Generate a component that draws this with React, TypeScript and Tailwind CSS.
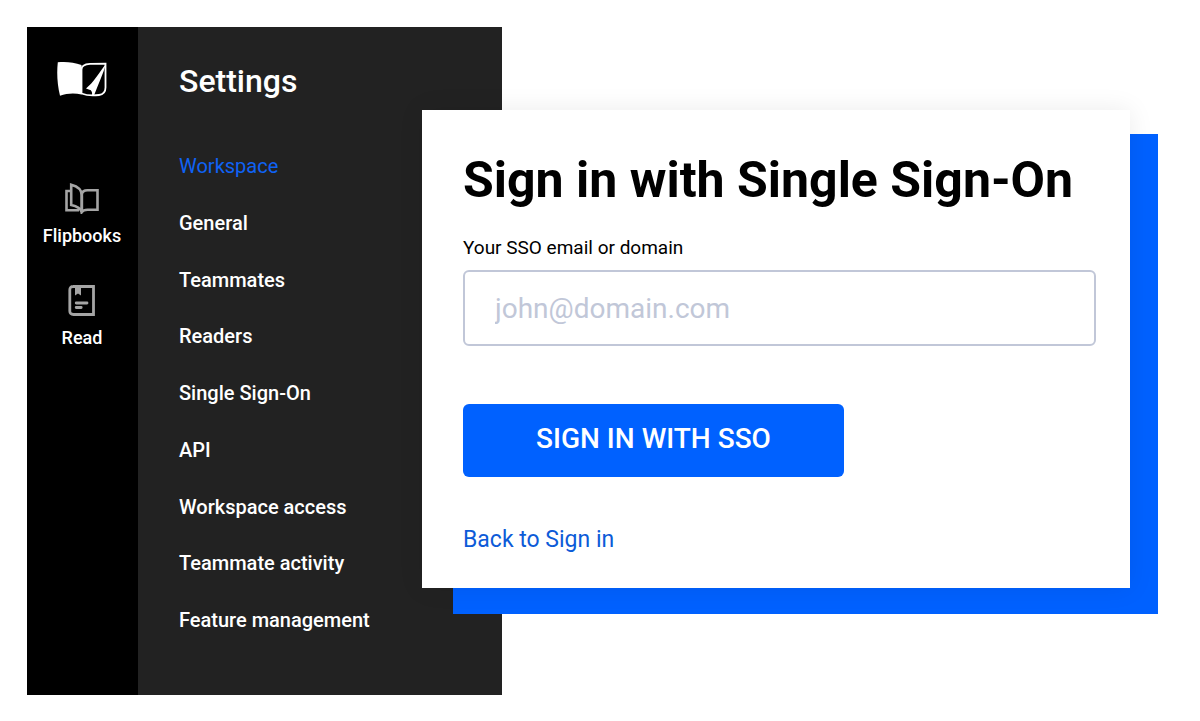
import clsx from "clsx";

const menuItems = [
  "Workspace",
  "General",
  "Teammates",
  "Readers",
  "Single Sign-On",
  "API",
  "Workspace access",
  "Teammate activity",
  "Feature management",
];

function Logo() {
  return (
    <svg viewBox="0 0 50 36" className="h-9 w-[50px]" fill="none" aria-hidden="true">
      <path
        d="M.8 1.2C9 .4 17 1.2 24.5 4V33.5c-7-1.5-14.5-1.2-21.5 1.2C.3 24-.4 12 .8 1.2Z"
        fill="#fff"
      />
      <path
        d="M24.5 8.5C24.5 4.5 28 3.2 33 2.9L48.5 2.6V26.5c0 4.800-2 6.900-6.500 7.500-6 .8-11.500.8-17.500-1.500Z"
        stroke="#fff"
        strokeWidth="1.800"
      />
      <path
        d="M49.2 2.5C46 13 41 24 37 34.5h-2c.4-2.500-.2-4.200-1.200-5.200l-4.800-1.800C36.500 21.500 42 12 49.2 2.500Z"
        fill="#fff"
      />
    </svg>
  );
}

function FlipbooksIcon() {
  return (
    <svg
      viewBox="0 0 34 32"
      className="h-8 w-[34px]"
      fill="none"
      stroke="#a5a5a5"
      strokeWidth="2.600"
      aria-hidden="true"
    >
      <path d="M16.800 30V13.500C16.800 7.500 11.500 4 6.200 2.700V23C11.500 24.200 15.500 26 16.800 30Z" />
      <path d="M16.800 30V13c0-3.500 2.200-4.800 5.700-4.800h10v19.600H22.500c-2.700 0-4.500.4-5.700 2.200Z" />
      <path d="M6.200 9H1.500v19.300H14" />
    </svg>
  );
}

function ReadIcon() {
  return (
    <svg viewBox="0 0 27 32" className="h-8 w-[27px]" fill="none" stroke="#a5a5a5" aria-hidden="true">
      <path
        d="M5 2.500h20.500v28H5.500c-2.500 0-3.700-1.200-3.700-3.500V6c0-2.300 1-3.500 3.500-3.500Z"
        strokeWidth="2.800"
      />
      <path d="M7 3h6v8.500L10 9.500l-3 2Z" fill="#a5a5a5" stroke="none" />
      <path d="M8.200 19h10.800M8.200 23.500h5" strokeWidth="2.800" strokeLinecap="round" />
    </svg>
  );
}

function Rail() {
  return (
    <div className="flex w-[111px] shrink-0 flex-col items-center bg-black pr-px pt-[34px]">
      <a href="#home" aria-label="Home">
        <Logo />
      </a>
      <nav className="mt-[85px] flex flex-col items-center gap-9 text-lg font-medium leading-6">
        <a href="#flipbooks" className="flex flex-col items-center gap-2.5">
          <FlipbooksIcon />
          Flipbooks
        </a>
        <a href="#read" className="flex flex-col items-center gap-2.5">
          <ReadIcon />
          Read
        </a>
      </nav>
    </div>
  );
}

function SettingsMenu() {
  return (
    <div className="flex w-[364px] shrink-0 flex-col bg-[#222] pb-[61px] pl-[41px] pt-[34px]">
      <h2 className="text-[32px] font-medium leading-10">Settings</h2>
      <nav className="mt-[51px] flex flex-1 flex-col items-start justify-between text-xl font-medium leading-7">
        {menuItems.map((item, i) => (
          <a key={item} href="#settings" className={clsx(i === 0 && "font-normal text-[#0f62f5]")}>
            {item}
          </a>
        ))}
      </nav>
    </div>
  );
}

function SignInCard() {
  return (
    <main className="relative z-10 -ml-20 mr-[15px] mt-[83px] min-w-0 flex-1 self-start">
      <div className="absolute bottom-0 left-[31px] right-0 top-6 bg-[#0061ff]" />
      <form className="relative mb-[26px] mr-7 flex flex-col items-start bg-white pb-[34px] pl-[41px] pr-[34px] pt-10 shadow-[0_0_24px_rgba(0,0,0,0.08)]">
        <h1 className="text-[50px] font-bold leading-[60px]">Sign in with Single Sign-On</h1>
        <label htmlFor="sso" className="mt-6 text-[19px] leading-7">
          Your SSO email or domain
        </label>
        <input
          id="sso"
          type="text"
          placeholder="john@domain.com"
          className="mt-2 h-[76px] w-full rounded-md border-2 border-[#c1c7d8] px-[30px] text-[28px] outline-none placeholder:text-[#c1c7d8]"
        />
        <button
          type="button"
          className="mt-[58px] h-[73px] w-[381px] rounded-md bg-[#0061ff] pb-1 text-[28px] font-medium text-white"
        >
          SIGN IN WITH SSO
        </button>
        <a href="#sign-in" className="mt-[49px] text-[23px] leading-7 text-[#0d5bd8]">
          Back to Sign in
        </a>
      </form>
    </main>
  );
}

export default function App() {
  return (
    <div className="flex min-h-screen bg-white px-[27px] pb-[26px] pt-[27px] font-[Roboto,sans-serif] text-black">
      <div className="flex shrink-0 text-white">
        <Rail />
        <SettingsMenu />
      </div>
      <SignInCard />
    </div>
  );
}
